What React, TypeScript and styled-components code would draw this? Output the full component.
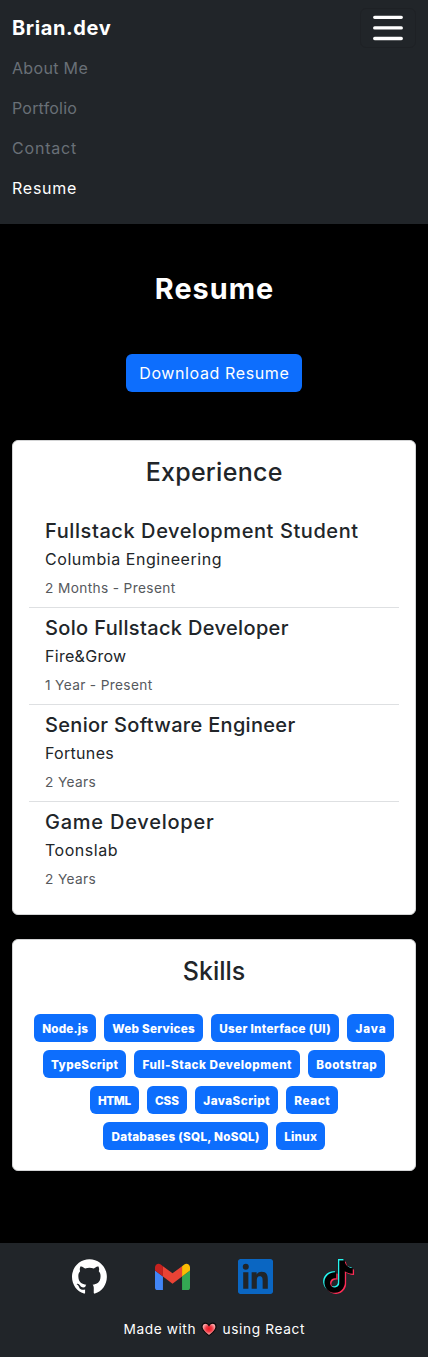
import React from 'react';
import styled, { createGlobalStyle } from 'styled-components';
import { SiTiktok } from 'react-icons/si';

const GlobalStyle = createGlobalStyle`
  *, *::before, *::after { box-sizing: border-box; }
  body {
    margin: 0;
    background: #000;
    color: #212529;
    font-family: Inter, sans-serif;
    font-size: 16px;
    line-height: 24px;
  }
  h1, h2, h3, p, ul { margin: 0; padding: 0; }
`;

const Spaced = styled.span<{ $track: number }>`
  letter-spacing: ${(p) => p.$track}px;
  margin-right: ${(p) => -p.$track}px;
  white-space: nowrap;
`;

const Navbar = styled.nav`
  background: #212529;
  padding: 8px 12px 16px;
`;

const NavTop = styled.div`
  display: flex;
  align-items: center;
  justify-content: space-between;
  height: 40px;
`;

const Brand = styled.a`
  color: #fff;
  font-size: 20px;
  font-weight: 700;
`;

const Toggler = styled.button`
  display: flex;
  align-items: center;
  justify-content: center;
  width: 56px;
  height: 40px;
  padding: 0;
  background: transparent;
  border: 1px solid #1e2125;
  border-radius: 6px;
`;

const NavList = styled.ul`
  list-style: none;
`;

const NavItem = styled.li<{ $active?: boolean }>`
  padding: 8px 0;
  color: ${(p) => (p.$active ? '#fff' : '#697077')};
`;

const Main = styled.main`
  display: flex;
  flex-direction: column;
  align-items: center;
  padding: 48px 12px 72px;
`;

const PageTitle = styled.h1`
  color: #fff;
  font-size: 28.8px;
  font-weight: 700;
  line-height: 34px;
`;

const DownloadButton = styled.button`
  width: 176px;
  height: 38px;
  margin: 48px 0;
  padding: 0;
  border: 0;
  border-radius: 6px;
  background: #0d6efd;
  color: #fff;
  font: inherit;
`;

const Card = styled.section`
  width: 100%;
  padding: 16px;
  background: #fff;
  border: 1px solid #d3d4d5;
  border-radius: 6px;
  & + & { margin-top: 24px; }
`;

const CardTitle = styled.h2<{ $gap: number }>`
  margin-bottom: ${(p) => p.$gap}px;
  font-size: 25px;
  font-weight: 500;
  line-height: 30px;
  text-align: center;
`;

const Job = styled.article`
  padding: 8px 16px;
  & + & { border-top: 1px solid #dee0e2; }
`;

const JobTitle = styled.h3`
  margin-bottom: 4px;
  font-size: 20px;
  font-weight: 500;
  line-height: 24px;
`;

const Company = styled.p`
  margin-bottom: 6px;
`;

const Period = styled.p`
  color: #56595d;
  font-size: 13.7px;
  line-height: 22px;
`;

const Badges = styled.div`
  display: flex;
  flex-wrap: wrap;
  justify-content: center;
  gap: 8px;
  padding-bottom: 4px;
`;

const Badge = styled.span<{ $width: number }>`
  width: ${(p) => p.$width}px;
  height: 28px;
  padding-top: 1px;
  border-radius: 6px;
  background: #0d6efd;
  color: #fff;
  font-size: 11.7px;
  font-weight: 800;
  line-height: 28px;
  text-align: center;
`;

const Footer = styled.footer`
  display: flex;
  flex-direction: column;
  align-items: center;
  height: 114px;
  padding-top: 16px;
  background: #212529;
`;

const Socials = styled.div`
  display: flex;
  gap: 48px;
  height: 35px;
  margin-bottom: 24px;
`;

const TikTokMark = styled.span`
  display: grid;
  width: 35px;
  height: 35px;
  svg { grid-area: 1 / 1; width: 32.6px; height: 32.6px; }
`;

const TikTokLayer = styled(SiTiktok)<{ $dx: number; $dy: number; $tint: string }>`
  color: ${(p) => p.$tint};
  transform: translate(${(p) => p.$dx}px, ${(p) => p.$dy}px);
`;

const Credit = styled.p`
  display: flex;
  align-items: center;
  color: #fff;
  font-size: 13.7px;
  line-height: 22px;
  svg { margin: 0 5.5px; }
`;

function Track({ by, children }: { by: number; children: React.ReactNode }) {
  return <Spaced $track={by}>{children}</Spaced>;
}

const GitHubLogo = () => (
  <svg width="35" height="35" viewBox="0 0 98 96" fill="#fff">
    <path fillRule="evenodd" clipRule="evenodd" d="M48.854 0C21.839 0 0 22 0 49.217c0 21.756 13.993 40.172 33.405 46.69 2.427.49 3.316-1.059 3.316-2.362 0-1.141-.08-5.052-.08-9.127-13.59 2.934-16.42-5.867-16.42-5.867-2.184-5.704-5.42-7.17-5.42-7.17-4.448-3.015.324-3.015.324-3.015 4.934.326 7.523 5.052 7.523 5.052 4.367 7.496 11.404 5.378 14.235 4.074.404-3.178 1.699-5.378 3.074-6.6-10.839-1.141-22.243-5.378-22.243-24.283 0-5.378 1.94-9.778 5.014-13.2-.485-1.222-2.184-6.275.486-13.038 0 0 4.125-1.304 13.426 5.052a46.97 46.97 0 0 1 12.214-1.63c4.125 0 8.33.571 12.213 1.63 9.302-6.356 13.427-5.052 13.427-5.052 2.67 6.763.97 11.816.485 13.038 3.155 3.422 5.015 7.822 5.015 13.2 0 18.905-11.404 23.06-22.324 24.283 1.78 1.548 3.316 4.481 3.316 9.126 0 6.6-.08 11.897-.08 13.526 0 1.304.89 2.853 3.316 2.364 19.412-6.52 33.405-24.935 33.405-46.691C97.707 22 75.788 0 48.854 0z" />
  </svg>
);

const GmailLogo = () => (
  <svg width="35" height="35" viewBox="52 31 88 86">
    <path fill="#4285f4" d="M58 108h14V74L52 59v43c0 3.320 2.690 6 6 6" />
    <path fill="#34a853" d="M120 108h14c3.320 0 6-2.690 6-6V59l-20 15" />
    <path fill="#fbbc04" d="M120 48v26l20-15v-8c0-7.420-8.470-11.650-14.400-7.200" />
    <path fill="#ea4335" d="M72 74V48l24 18 24-18v26L96 92" />
    <path fill="#c5221f" d="M52 51v8l20 15V48l-5.600-4.200c-5.940-4.450-14.400-.22-14.400 7.200" />
  </svg>
);

const LinkedInLogo = () => (
  <svg width="35" height="35" viewBox="0 0 24 24" fill="#0a66c2">
    <path d="M20.447 20.452h-3.554v-5.569c0-1.328-.027-3.037-1.852-3.037-1.853 0-2.136 1.445-2.136 2.939v5.667H9.351V9h3.414v1.561h.046c.477-.9 1.637-1.850 3.370-1.850 3.601 0 4.267 2.370 4.267 5.455v6.286zM5.337 7.433a2.062 2.062 0 0 1-2.063-2.065 2.064 2.064 0 1 1 2.063 2.065zm1.782 13.019H3.555V9h3.564v11.452zM22.225 0H1.771C.792 0 0 .774 0 1.729v20.542C0 23.227.792 24 1.771 24h20.451C23.200 24 24 23.227 24 22.271V1.729C24 .774 23.200 0 22.222 0h.003z" />
  </svg>
);

const TikTokLogo = () => (
  <TikTokMark>
    <TikTokLayer $dx={0} $dy={0} $tint="#25f4ee" />
    <TikTokLayer $dx={2.6} $dy={2.4} $tint="#fe2c55" />
    <TikTokLayer $dx={1.3} $dy={1.2} $tint="#000" />
  </TikTokMark>
);

const Heart = () => (
  <svg width="16" height="15" viewBox="0 0 16 15">
    <defs>
      <radialGradient id="heart" cx="50%" cy="45%" r="55%">
        <stop offset="0" stopColor="#ee1720" />
        <stop offset="0.4" stopColor="#f03a44" />
        <stop offset="0.8" stopColor="#f6a0a2" />
      </radialGradient>
    </defs>
    <path d="M8 13.700C5 11.200 1 8.600 1 4.900 1 2.600 2.600 1.200 4.500 1.200c1.500 0 2.800.9 3.500 2.300.7-1.400 2-2.300 3.500-2.300 1.900 0 3.500 1.400 3.500 3.700 0 3.700-4 6.300-7 8.800z" fill="url(#heart)" stroke="#080808" strokeWidth="1.200" />
  </svg>
);

const links = [
  { label: 'About Me', track: 0.33 },
  { label: 'Portfolio', track: 0.2 },
  { label: 'Contact', track: 0.8 },
  { label: 'Resume', track: 0.76, active: true },
];

const jobs = [
  { title: 'Fullstack Development Student', tt: 0.58, company: 'Columbia Engineering', ct: 0.55, period: '2 Months - Present', pt: 0.36 },
  { title: 'Solo Fullstack Developer', tt: 0.35, company: 'Fire&Grow', ct: 0.3, period: '1 Year - Present', pt: 0.34 },
  { title: 'Senior Software Engineer', tt: 0.31, company: 'Fortunes', ct: 0.3, period: '2 Years', pt: 0.34 },
  { title: 'Game Developer', tt: 0.76, company: 'Toonslab', ct: 0.53, period: '2 Years', pt: 0.34 },
];

const skills: [string, number, number][] = [
  ['Node.js', 62, 0.15],
  ['Web Services', 99, 0.25],
  ['User Interface (UI)', 128, 0.3],
  ['Java', 47, 0.85],
  ['TypeScript', 83, 0.35],
  ['Full-Stack Development', 166, 0.5],
  ['Bootstrap', 77, 0.46],
  ['HTML', 49, -0.4],
  ['CSS', 40, -0.15],
  ['JavaScript', 83, 0.45],
  ['React', 52, 0.6],
  ['Databases (SQL, NoSQL)', 165, 0.26],
  ['Linux', 49, 0.25],
];

export default function App() {
  return (
    <>
      <GlobalStyle />
      <Navbar>
        <NavTop>
          <Brand><Track by={0.6}>Brian.dev</Track></Brand>
          <Toggler aria-label="Toggle navigation">
            <svg width="32" height="28" viewBox="0 0 32 28" stroke="#fff" strokeWidth="3.300" strokeLinecap="round">
              <path d="M2.700 3.300h26.600M2.700 13.900h26.600M2.700 24.500h26.600" />
            </svg>
          </Toggler>
        </NavTop>
        <NavList>
          {links.map((l) => (
            <NavItem key={l.label} $active={l.active}><Track by={l.track}>{l.label}</Track></NavItem>
          ))}
        </NavList>
      </Navbar>
      <Main>
        <PageTitle><Track by={1.05}>Resume</Track></PageTitle>
        <DownloadButton><Track by={0.61}>Download Resume</Track></DownloadButton>
        <Card>
          <CardTitle $gap={24}><Track by={0.27}>Experience</Track></CardTitle>
          {jobs.map((j) => (
            <Job key={j.title}>
              <JobTitle><Track by={j.tt}>{j.title}</Track></JobTitle>
              <Company><Track by={j.ct}>{j.company}</Track></Company>
              <Period><Track by={j.pt}>{j.period}</Track></Period>
            </Job>
          ))}
        </Card>
        <Card>
          <CardTitle $gap={28}>Skills</CardTitle>
          <Badges>
            {skills.map(([name, width, track]) => (
              <Badge key={name} $width={width}><Track by={track}>{name}</Track></Badge>
            ))}
          </Badges>
        </Card>
      </Main>
      <Footer>
        <Socials>
          <GitHubLogo />
          <GmailLogo />
          <LinkedInLogo />
          <TikTokLogo />
        </Socials>
        <Credit>
          <Track by={0.57}>Made with</Track>
          <Heart />
          <Track by={0.62}>using React</Track>
        </Credit>
      </Footer>
    </>
  );
}
